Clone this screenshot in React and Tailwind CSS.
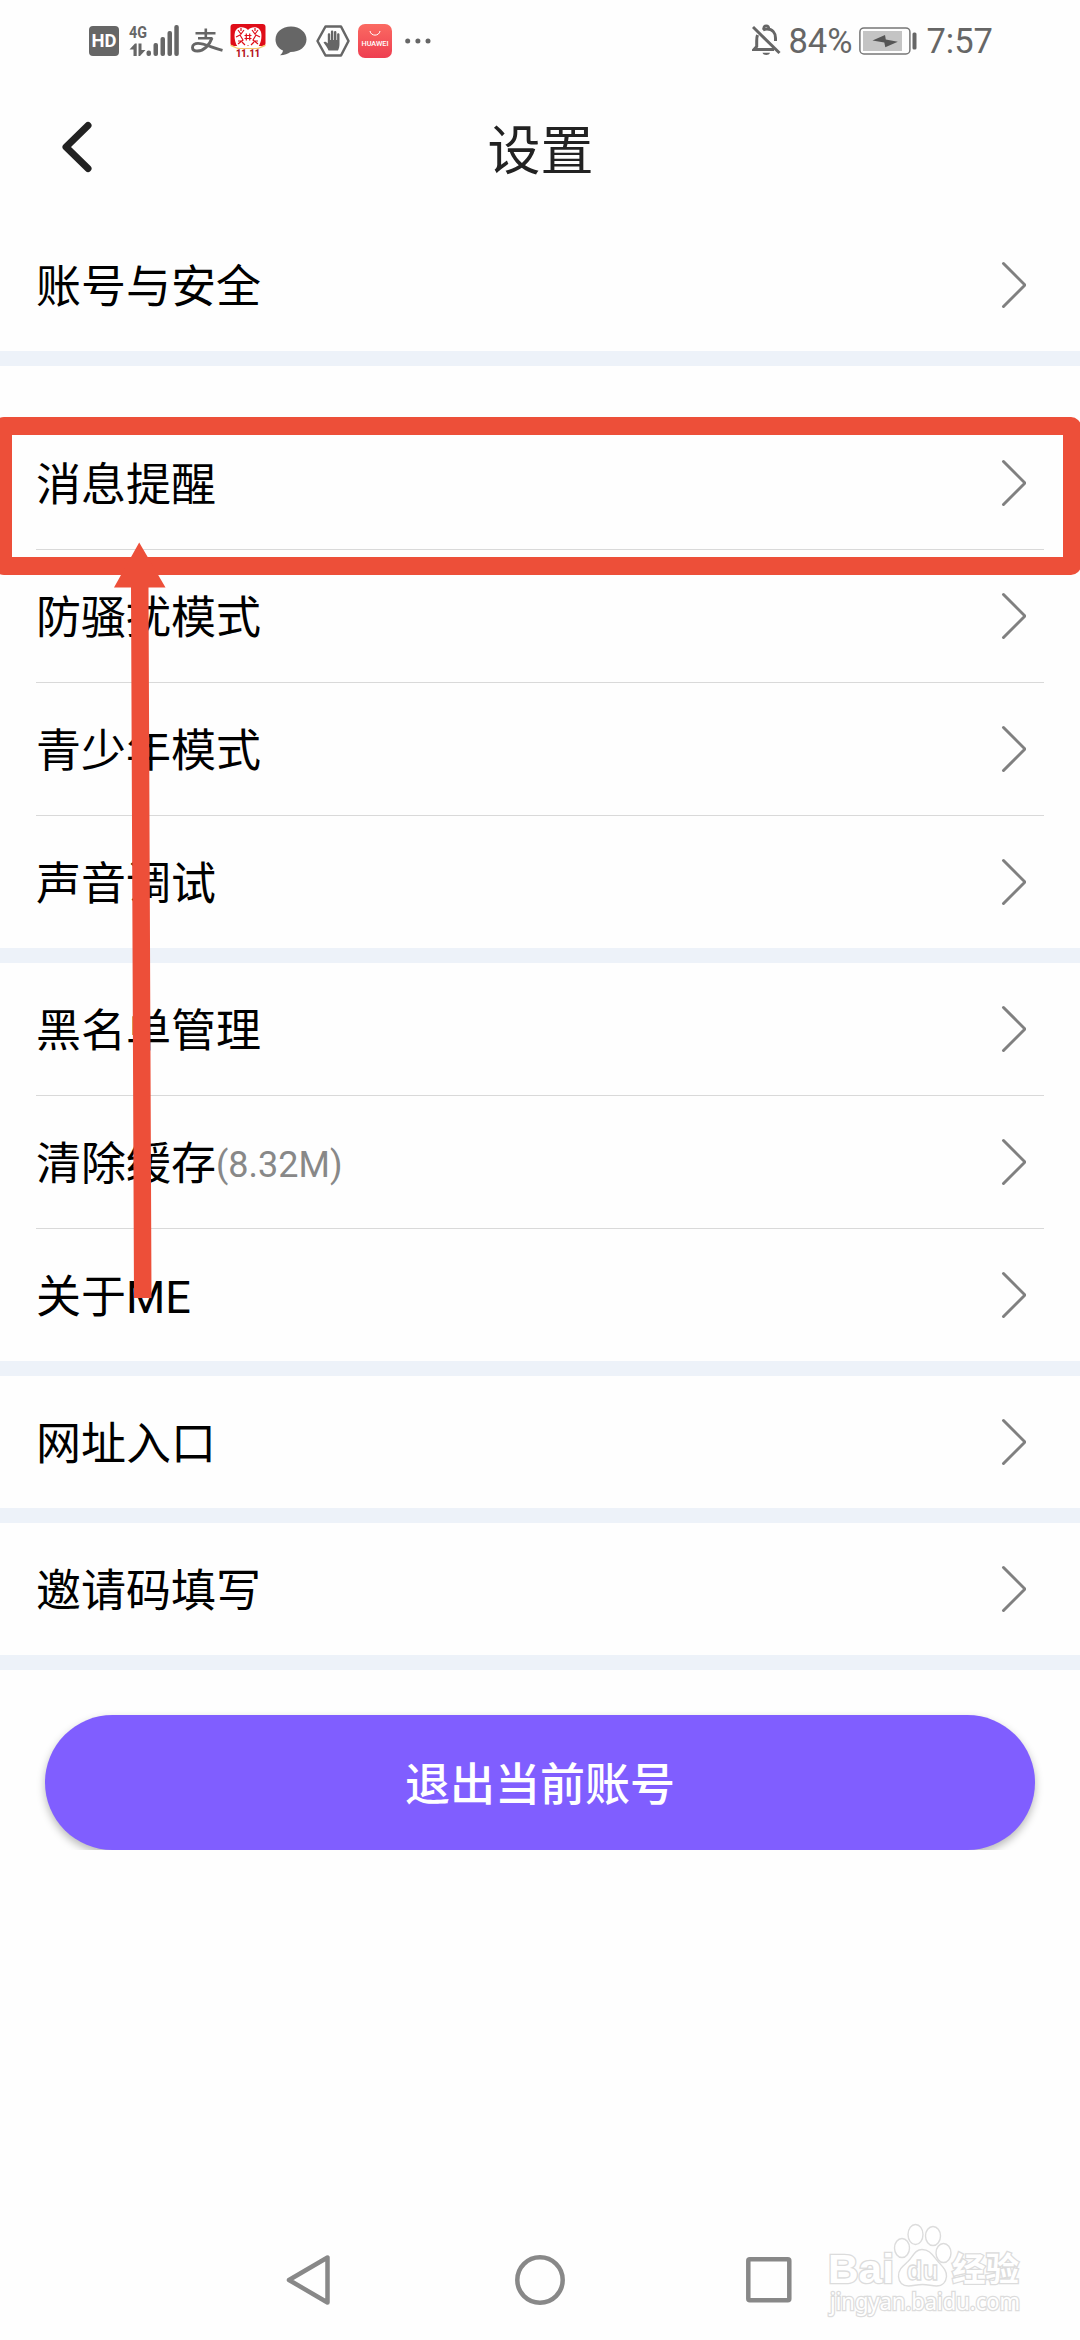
const FONT = "font-[Roboto,'Noto_Sans_CJK_SC',sans-serif]";

function Hd() {
  return (
    <svg width="30" height="30" viewBox="0 0 30 30" className="shrink-0">
      <rect width="30" height="30" rx="4" fill="#666" />
      <text x="15" y="21" textAnchor="middle" textLength="25" lengthAdjust="spacingAndGlyphs" fontFamily="Roboto, sans-serif" fontWeight="700" fontSize="17.5" fill="#fff">HD</text>
    </svg>
  );
}

function Signal() {
  return (
    <svg width="50" height="32" viewBox="0 0 50 32" className="ml-[10px] shrink-0 overflow-visible">
      <text x="0" y="12.5" textLength="18" lengthAdjust="spacingAndGlyphs" fontFamily="Roboto, sans-serif" fontWeight="700" fontSize="16.5" fill="#666">4G</text>
      <g fill="#666">
        <path d="M0.500 24.500L6 18.500h1.700V31H4.500v-6.500zM9.500 18.500h3v6.500h4l-5.500 6h-1.500z" />
        <rect x="17.500" y="25.500" width="4.500" height="5.500" rx="2" />
        <rect x="24.500" y="18" width="4.500" height="13" rx="2" />
        <rect x="31.500" y="12" width="4.500" height="19" rx="2" />
        <rect x="38.500" y="6" width="4.500" height="25" rx="2" />
        <rect x="45.300" y="0" width="4.500" height="31" rx="2" />
      </g>
    </svg>
  );
}

function Alipay() {
  return (
    <svg width="33" height="26" viewBox="0 0 33 26" fill="none" stroke="#666" className="ml-[12px] shrink-0">
      <path d="M4.500 5.300h20M14.800 0.500v9.500M7 10.200h14.500" strokeWidth="2.600" />
      <path d="M21 10c-2.500 7-8 13-14.500 13-3.500 0-5-1.500-5-3.600 0-2.600 2.500-4 5.500-4C13 15.400 21 19.500 31.500 22.300" strokeWidth="2.900" />
    </svg>
  );
}

function Sale() {
  return (
    <svg width="36" height="34" viewBox="0 0 36 34" className="ml-[6px] shrink-0 overflow-visible">
      <rect x="0.500" y="0" width="35" height="22" rx="3" fill="#df0d18" />
      <path d="M0.500 20.500c4 1 5 3 9 3.500h17c4-.5 5-2.500 9-3.500v1.500l-7 3h-21l-7-3z" fill="#f7c56b" />
      <path d="M18 6C14.500 2 6 2 4.800 9c-.8 4 .2 10 2.700 13.500l8 1.500 2.500-3 2.500 3 8-1.500C31 19 32 13 31.200 9 30 2 21.500 2 18 6z" fill="#fff" />
      <g stroke="#df0d18" strokeWidth="1.200" fill="none">
        <path d="M8 6l3 4 3-4M6 13l4-2 3 5-5 4M12 18l3 3M28 6l-3 4-3-4M30 13l-4-2-3 5 5 4M24 18l-3 3M11 4v3M25 4v3M8 17h4M24 17h4" />
        <path d="M16.300 9.500v7M19.700 9.500v7M14.500 11.500h7M14.500 14.500h7" />
      </g>
      <text x="18" y="33" textAnchor="middle" textLength="24" lengthAdjust="spacingAndGlyphs" fontFamily="Roboto, sans-serif" fontWeight="900" fontSize="10.500" fill="#b5141d">11.11</text>
    </svg>
  );
}

function Chat() {
  return (
    <svg width="32" height="30" viewBox="0 0 32 30" className="ml-[9px] shrink-0">
      <path d="M16 0.500C7 0.500.5 6 .5 13.500c0 5 3 9 7.500 11-.3 2-1.500 3.500-3 4.800 4.500 0 8-1.500 10.500-3.300C25 26 31.500 20.500 31.500 13.500S25 .5 16 .5z" fill="#666" />
    </svg>
  );
}

function Hand() {
  return (
    <svg width="34" height="32" viewBox="0 0 34 32" className="ml-[9px] shrink-0">
      <path d="M9.500 1.500h15.500l7.500 14.500-7.500 14.500H9.500L1.500 16z" fill="none" stroke="#666" strokeWidth="2.500" strokeLinejoin="round" />
      <path d="M12.500 25.500c-1-2.500-3-5.500-5-8 .8-1.500 2.800-1 4.300 1V9.500c0-1.800 2.400-1.800 2.400 0V15h.7V6.800c0-1.700 2.400-1.700 2.400 0V15h.7V7.300c0-1.700 2.400-1.700 2.400 0V15h.7V9.500c0-1.700 2.400-1.700 2.400 0v9.500c0 2.500-.6 4.500-1.500 6.500z" fill="#666" />
    </svg>
  );
}

function Huawei() {
  return (
    <svg width="34" height="34" viewBox="0 0 34 34" className="ml-[8px] shrink-0">
      <defs>
        <linearGradient id="hw" x1="0" y1="0" x2="0" y2="1">
          <stop offset="0" stopColor="#fb6a62" />
          <stop offset="1" stopColor="#ee3e51" />
        </linearGradient>
      </defs>
      <rect width="34" height="34" rx="7" fill="url(#hw)" />
      <path d="M12 7c.8 5.500 9.200 5.500 10 0" fill="none" stroke="#fff" strokeWidth="1" />
      <text x="17" y="21.500" textAnchor="middle" textLength="27" lengthAdjust="spacingAndGlyphs" fontFamily="Roboto, sans-serif" fontWeight="500" fontSize="6.500" fill="#fff">HUAWEI</text>
    </svg>
  );
}

function Dots() {
  return (
    <svg width="26" height="6" viewBox="0 0 26 6" fill="#666" className="ml-[13px] shrink-0">
      <circle cx="2.700" cy="3" r="2.500" />
      <circle cx="12.900" cy="3" r="2.500" />
      <circle cx="23" cy="3" r="2.500" />
    </svg>
  );
}

function Bell() {
  return (
    <svg width="30" height="32" viewBox="0 0 30 32" className="-mt-[2px] shrink-0" fill="none" stroke="#666" strokeWidth="3">
      <path d="M5.500 11c-.8 2-.8 4-.8 6v5.500L2 25.500h20M11 6c1-.6 2.500-1 4-1 5.500 0 8.500 4 8.500 9v3" />
      <path d="M11.500 5.500C11.500 .5 17 .5 17 5.500" strokeWidth="2.500" />
      <path d="M1 3l26.500 26" />
      <path d="M10.500 28.700h7.500c-.8 3-6.700 3-7.500 0z" fill="#666" stroke="none" />
    </svg>
  );
}

function Battery() {
  return (
    <svg width="59" height="28" viewBox="0 0 59 28" className="shrink-0">
      <rect x="0.900" y="0.900" width="50" height="26" rx="4" fill="none" stroke="#777" strokeWidth="1.500" />
      <rect x="4" y="4" width="39" height="20" fill="#c4c4c4" />
      <path d="M13.500 13.500L26 8l.8 4.500 12 2.200-12.500 5.500-1-4.700z" fill="#555" />
      <rect x="53.500" y="5.500" width="4" height="17" rx="1.500" fill="#666" />
    </svg>
  );
}

function StatusBar() {
  return (
    <div className="flex h-[83px] shrink-0 items-start justify-between pr-[87px] pl-[89px] text-[#666]">
      <div className="flex h-[82px] items-center">
        <Hd />
        <Signal />
        <Alipay />
        <Sale />
        <Chat />
        <Hand />
        <Huawei />
        <Dots />
      </div>
      <div className="flex h-[82px] items-center text-[34.500px] leading-none">
        <Bell />
        <span className="ml-[6px] w-[63px] whitespace-nowrap">84%</span>
        <span className="ml-[8px] flex"><Battery /></span>
        <span className="ml-[8px]">7:57</span>
      </div>
    </div>
  );
}

function Row({ label, note, last }) {
  return (
    <div className={last ? "mx-[36px]" : "mx-[36px] border-b border-[#d9d9d9]"}>
      <div className="flex h-[132px] items-center justify-between pr-[18px]">
        <div className="flex items-center pt-[6px] text-[45px] leading-[66px] text-black">
          <span>{label}</span>
          {note && <span className="text-[36px] text-[#888]">{note}</span>}
        </div>
        <svg width="26" height="48" viewBox="0 0 26 48" fill="none" stroke="#808080" strokeWidth="3" strokeLinecap="round" strokeLinejoin="round">
          <path d="M3.500 2.500L25 24 3.500 45.500" />
        </svg>
      </div>
    </div>
  );
}

const GROUPS = [
  [{ label: "账号与安全" }],
  [{ label: "消息提醒" }, { label: "防骚扰模式" }, { label: "青少年模式" }, { label: "声音调试" }],
  [{ label: "黑名单管理" }, { label: "清除缓存", note: "(8.32M)" }, { label: "关于ME" }],
  [{ label: "网址入口" }],
  [{ label: "邀请码填写" }],
];

function Annotation() {
  return (
    <>
      <div className="absolute top-[417px] left-[-6px] h-[158px] w-[1087px] rounded-[10px] border-[18px] border-[#ed4f39]" />
      <svg width="60" height="760" viewBox="0 0 60 760" className="absolute top-[542px] left-[110px]" fill="#ed4f39">
        <path d="M29.200 0.500L55.500 45.500H38.500L41.500 756H24L21 45.500H4z" />
      </svg>
    </>
  );
}

function Watermark() {
  return (
    <svg width="210" height="110" viewBox="0 0 210 110" className="absolute top-[2216px] left-[821px] overflow-visible" fill="#fff" stroke="#dcdcdc" strokeWidth="1.400">
      <g fontFamily="'Liberation Sans', sans-serif" style={{ paintOrder: "stroke" }} strokeWidth="2.600">
        <text x="7" y="67" textLength="66" lengthAdjust="spacingAndGlyphs" fontSize="41" fontWeight="700">Bai</text>
        <text x="131" y="65" textLength="67" lengthAdjust="spacingAndGlyphs" fontSize="33" fontWeight="700" fontFamily="'Noto Sans CJK SC', sans-serif">经验</text>
        <text x="9" y="94" textLength="190" lengthAdjust="spacingAndGlyphs" fontSize="23" fontFamily="'Noto Sans', sans-serif">jingyan.baidu.com</text>
      </g>
      <ellipse cx="81" cy="32" rx="7.500" ry="9.500" />
      <ellipse cx="94.500" cy="18.500" rx="7.500" ry="10" />
      <ellipse cx="112" cy="20" rx="7.500" ry="9.500" />
      <ellipse cx="122.500" cy="37" rx="7.500" ry="9.500" />
      <path d="M101 33.500c-7 0-9 7-14 12-5 4.500-10 8-9.500 15 .5 6 4 9.500 10 9.500 5 0 8-1.500 14-1.500s9 1.500 14 1.500c6 0 9.500-4 10-9.500.4-6-4-10-8.500-15-5-5.500-8-12-16-12z" />
      <text x="101.500" y="63.500" textAnchor="middle" textLength="32" lengthAdjust="spacingAndGlyphs" fontSize="27" fontWeight="700" fontFamily="'Liberation Sans', sans-serif" strokeWidth="1.300">du</text>
    </svg>
  );
}

export default function App() {
  return (
    <div className={`relative flex h-[2340px] w-[1080px] flex-col overflow-hidden bg-[#fefefe] ${FONT}`}>
      <StatusBar />
      <header className="flex h-[136px] shrink-0 items-center px-[60px]">
        <svg width="34" height="56" viewBox="0 0 34 56" fill="none" stroke="#222" strokeWidth="7" strokeLinecap="round" strokeLinejoin="round" className="-mt-[8px]">
          <path d="M28 6.500L6 28l22 21.500" />
        </svg>
        <h1 className="mr-[33px] flex-1 pt-[2px] text-center text-[53px] leading-[78px] text-[#222]">设置</h1>
      </header>
      {GROUPS.map((rows, i) => (
        <section key={i} className={i === 1 ? "shrink-0 border-b-[15px] border-[#edf2f9] pt-[51px]" : "shrink-0 border-b-[15px] border-[#edf2f9]"}>
          {rows.map((r, j) => (
            <Row key={r.label} {...r} last={j === rows.length - 1} />
          ))}
        </section>
      ))}
      <div className="mt-[35px] shrink-0 overflow-hidden px-[45px] pt-[10px]">
        <button className="block h-[135px] w-full rounded-full bg-[#805eff] pt-[6px] text-[45px] font-medium text-white shadow-[0_4px_9px_rgba(0,0,0,0.28)]">退出当前账号</button>
      </div>
      <nav className="mt-auto mb-[33px] flex shrink-0 items-center pl-[285px]">
        <svg width="46" height="54" viewBox="0 0 46 54" fill="none" stroke="#888" strokeWidth="4.500" strokeLinejoin="round">
          <path d="M42.500 4.500v45L4 27z" />
        </svg>
        <svg width="54" height="54" viewBox="0 0 54 54" fill="none" stroke="#888" strokeWidth="4.500" className="mr-[177px] ml-[182px]">
          <circle cx="27" cy="27" r="22.700" />
        </svg>
        <svg width="50" height="54" viewBox="0 0 50 54" fill="none" stroke="#888" strokeWidth="4.500">
          <rect x="4.300" y="6.200" width="41" height="41" rx="1.500" />
        </svg>
      </nav>
      <Annotation />
      <Watermark />
    </div>
  );
}
